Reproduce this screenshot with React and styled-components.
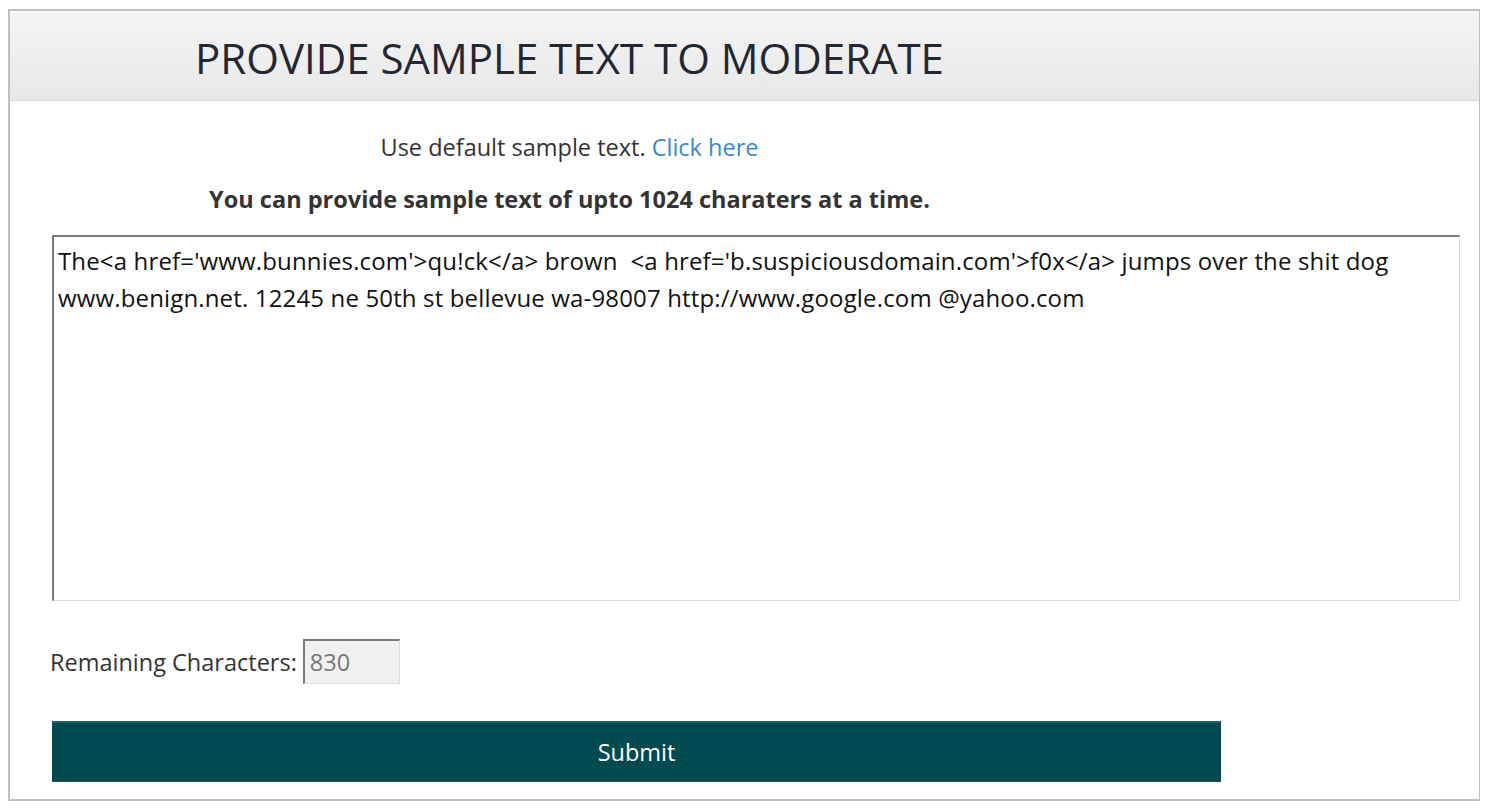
import React, { useEffect, useRef, useState } from "react";
import styled, { createGlobalStyle } from "styled-components";

const MAX_CHARS = 1024;

const SAMPLE_TEXT =
  "The<a href='www.bunnies.com'>qu!ck</a> brown  <a href='b.suspiciousdomain.com'>f0x</a> jumps over the shit dog\nwww.benign.net. 12245 ne 50th st bellevue wa-98007 http://www.google.com @yahoo.com";

const GlobalStyle = createGlobalStyle`
  body {
    margin: 9px 8px;
    background: #fff;
    font-family: "Open Sans", "Noto Sans", sans-serif;
    color: #333;
  }
`;

const Frame = styled.div`
  width: 1469px;
  height: 788px;
  border: 2px solid #c0c0c0;
  display: flex;
  flex-direction: column;
  overflow: hidden;
`;

const Header = styled.div`
  height: 88px;
  border-top: 1px solid #fbfbfb;
  border-bottom: 1px solid #d6d6d6;
  background: linear-gradient(#f4f4f4, #e8e8e8);
  display: flex;
  align-items: center;
`;

const Title = styled.h1`
  margin: 2px 0 0 42px;
  width: 1035px;
  text-align: center;
  font-size: 42px;
  font-weight: 400;
  color: #232733;
`;

const Body = styled.div`
  padding: 0 0 0 42px;
  display: flex;
  flex-direction: column;
`;

const Notice = styled.p`
  width: 1035px;
  margin: ${(p) => p.$top}px 0 0;
  text-align: center;
  font-size: 23.5px;
  font-weight: ${(p) => (p.$bold ? 700 : 400)};
  line-height: 28px;
  color: #333;
`;

const Link = styled.a`
  color: #3d88cb;
  text-decoration: none;
  cursor: pointer;
`;

const TextBox = styled.textarea`
  box-sizing: border-box;
  width: 1408px;
  height: 366px;
  margin-top: 22px;
  padding: 5px 4px;
  resize: none;
  border-style: solid;
  border-width: 2px 1px 1px 2px;
  border-color: #7b7b7b #dcdcdc #dcdcdc #7b7b7b;
  font-family: "Open Sans", "Noto Sans", sans-serif;
  font-size: 24px;
  line-height: 37px;
  letter-spacing: 0.15px;
  color: #111;
  outline: none;
  caret-color: #000;
`;

const CounterRow = styled.div`
  display: flex;
  align-items: center;
  margin-top: 38px;
  margin-left: -2px;
  font-size: 23.5px;
  color: #333;
`;

const CounterBox = styled.input`
  box-sizing: border-box;
  width: 97px;
  height: 45px;
  margin-left: 6px;
  padding: 0 5px;
  border-style: solid;
  border-width: 2px 1px 1px 2px;
  border-color: #7b7b7b #dcdcdc #dcdcdc #7b7b7b;
  background: #f0f0f0;
  font-family: "Open Sans", "Noto Sans", sans-serif;
  font-size: 23.5px;
  color: #777;
`;

const SubmitButton = styled.button`
  width: 1169px;
  height: 61px;
  margin-top: 37px;
  border: none;
  border-top: 2px solid #1d5e62;
  border-bottom: 1px solid #14595d;
  background: #014b50;
  color: #fff;
  font-family: "Open Sans", "Noto Sans", sans-serif;
  font-size: 23.5px;
  cursor: pointer;
`;

const App = () => {
  const [text, setText] = useState(SAMPLE_TEXT);
  const boxRef = useRef(null);

  useEffect(() => {
    const el = boxRef.current;
    if (el) {
      el.focus();
      el.setSelectionRange(el.value.length, el.value.length);
    }
  }, []);

  const onChange = (e) => setText(e.target.value.slice(0, MAX_CHARS));

  return (
    <>
      <GlobalStyle />
      <Frame>
        <Header>
          <Title>PROVIDE SAMPLE TEXT TO MODERATE</Title>
        </Header>
        <Body>
          <Notice $top={32}>
            Use default sample text.{" "}
            <Link onClick={() => setText(SAMPLE_TEXT)}>Click here</Link>
          </Notice>
          <Notice $top={24} $bold>
            You can provide sample text of upto 1024 charaters at a time.
          </Notice>
          <TextBox ref={boxRef} value={text} onChange={onChange} />
          <CounterRow>
            Remaining Characters:
            <CounterBox readOnly value={MAX_CHARS - text.length} />
          </CounterRow>
          <SubmitButton>Submit</SubmitButton>
        </Body>
      </Frame>
    </>
  );
};

export default App;
